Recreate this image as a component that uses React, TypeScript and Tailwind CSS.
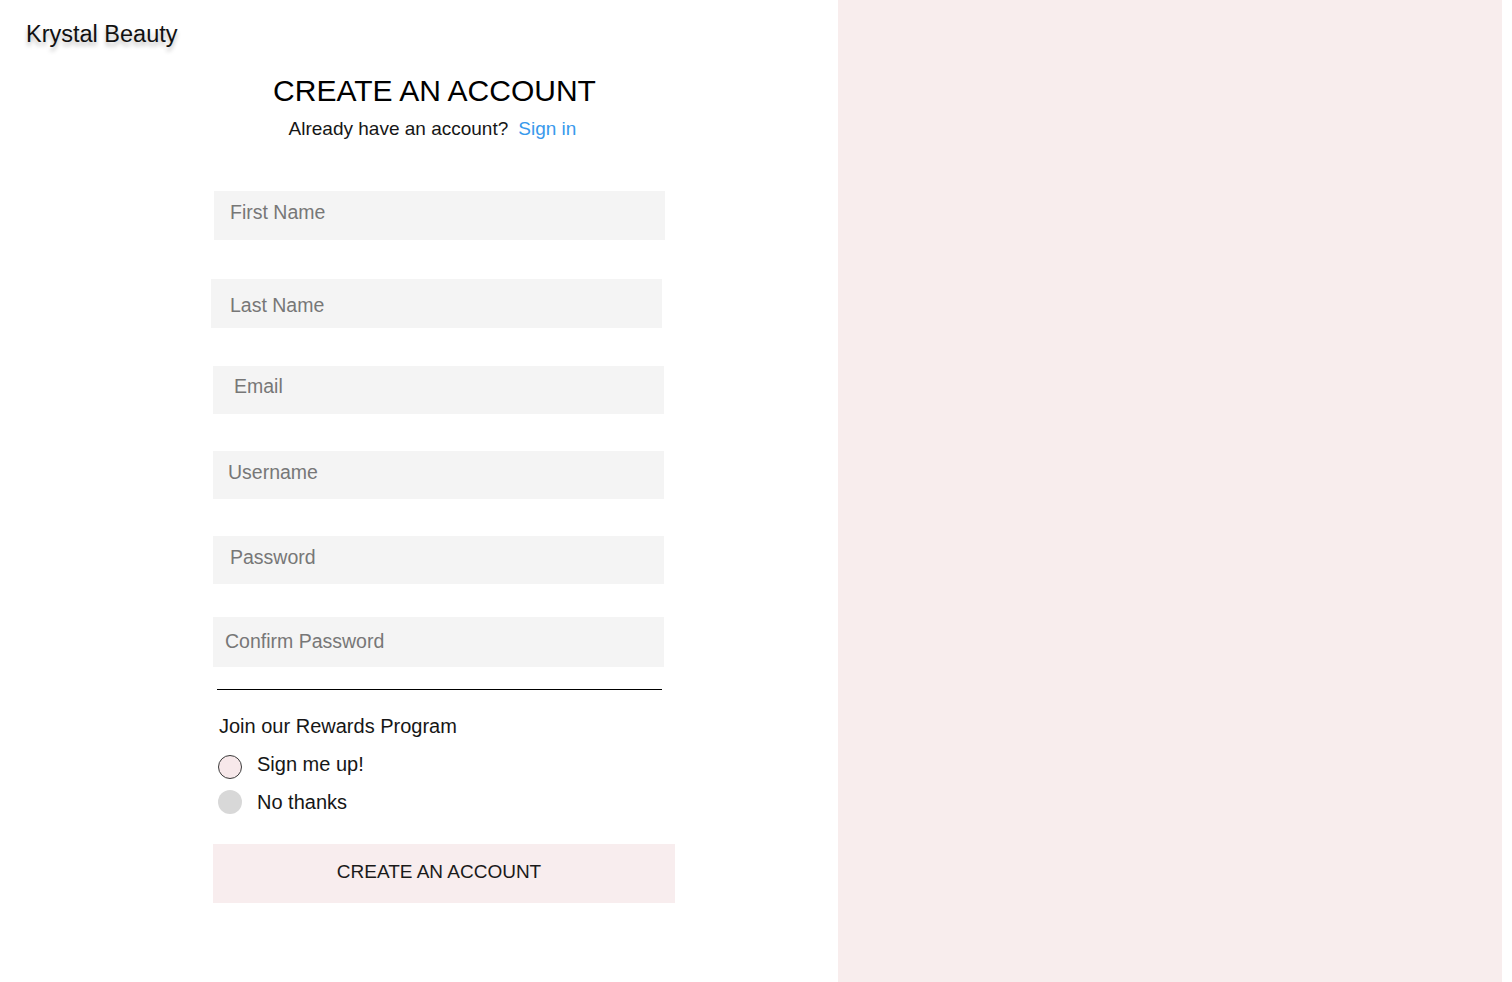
import React from 'react';

const fields = [
    { name: 'firstName', label: 'First Name', type: 'text', box: 'mt-[53px] ml-[214px] h-[49px] pl-[16px] pb-[7px]' },
    { name: 'lastName', label: 'Last Name', type: 'text', box: 'mt-[39px] ml-[211px] h-[49px] pl-[19px] pt-[4px]' },
    { name: 'email', label: 'Email', type: 'email', box: 'mt-[38px] ml-[213px] h-[48px] pl-[21px] pb-[7px]' },
    { name: 'username', label: 'Username', type: 'text', box: 'mt-[37px] ml-[213px] h-[48px] pl-[15px] pb-[5px]' },
    { name: 'password', label: 'Password', type: 'password', box: 'mt-[37px] ml-[213px] h-[48px] pl-[17px] pb-[5px]' },
    { name: 'confirm', label: 'Confirm Password', type: 'password', box: 'mt-[33px] ml-[213px] h-[50px] pl-[12px] pb-[2px]' },
];

export default function App() {
    return (
        <div className="flex w-[1512px] h-[982px] overflow-hidden bg-white font-['Liberation_Sans',Arial,sans-serif] text-[#111]">
            <div className="flex flex-col w-[838px] shrink-0">
                <div className="mt-[23px] ml-[26px] text-[23.5px] leading-[23px] [text-shadow:0_4px_4px_rgba(0,0,0,0.25)]">
                    Krystal Beauty
                </div>

                <h1 className="mt-[30px] ml-[213px] w-[443px] text-center text-[30px] leading-[30px] font-normal text-black">
                    CREATE AN ACCOUNT
                </h1>
                <p className="mt-[13px] ml-[213px] w-[439px] text-center text-[19px] leading-[19px] text-[#161616]">
                    Already have an account?
                    <a href="#" className="ml-[10px] text-[#3899ec]">Sign in</a>
                </p>

                <form className="flex flex-col" onSubmit={(e) => e.preventDefault()}>
                    {fields.map((f) => (
                        <input
                            key={f.name}
                            name={f.name}
                            type={f.type}
                            placeholder={f.label}
                            className={`${f.box} w-[451px] bg-[#f4f4f4] text-[19.5px] leading-[20px] text-[#333] placeholder:text-[#777] outline-none`}
                        />
                    ))}

                    <div className="mt-[22px] ml-[217px] w-[445px] h-px bg-black" />

                    <div className="mt-[26px] ml-[219px] text-[20px] leading-[20px] text-[#161616]">
                        Join our Rewards Program
                    </div>

                    <label className="mt-[19px] ml-[218px] flex items-start gap-[15px] text-[20px] leading-[20px] text-[#161616]">
                        <input
                            type="radio"
                            name="rewards"
                            className="appearance-none w-[24px] h-[24px] rounded-full border border-[#3a3a3a] bg-[#f7e8ea] shrink-0"
                        />
                        <span className="mt-[-1px]">Sign me up!</span>
                    </label>
                    <label className="mt-[11px] ml-[218px] flex items-start gap-[15px] text-[20px] leading-[20px] text-[#161616]">
                        <input
                            type="radio"
                            name="rewards"
                            className="appearance-none w-[24px] h-[24px] rounded-full bg-[#d8d8d8] shrink-0"
                        />
                        <span className="mt-[2px]">No thanks</span>
                    </label>

                    <button
                        type="submit"
                        className="mt-[30px] ml-[213px] w-[462px] h-[59px] bg-[#f8edee] text-[19px] leading-[19px] text-[#1a1a1a] pr-[10px] pb-[5px]"
                    >
                        CREATE AN ACCOUNT
                    </button>
                </form>
            </div>

            <div className="w-[664px] h-[982px] shrink-0 bg-[#f8eded]" />
        </div>
    );
}
